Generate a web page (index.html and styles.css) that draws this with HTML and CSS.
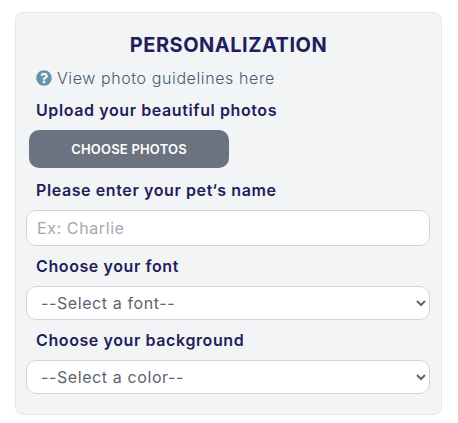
FILE: index.html
```html
<!DOCTYPE html>
<html lang="en">
<head>
<meta charset="utf-8">
<title>Personalization</title>
<link rel="stylesheet" href="styles.css">
</head>
<body>
<form class="card">
  <h2 class="title">PERSONALIZATION</h2>
  <a class="guide" href="#">
    <svg class="guide-icon" viewBox="0 0 512 512" aria-hidden="true"><path d="M504 256c0 137-111 248-248 248S8 393 8 256 119 8 256 8s248 111 248 248zM262.700 90c-54.500 0-89.300 23-116.600 63.800-3.500 5.300-2.400 12.400 2.700 16.300l34.700 26.300c5.200 3.900 12.600 3 16.700-2.100 17.900-22.700 30.100-35.800 57.300-35.800 20.400 0 45.700 13.100 45.700 33 0 15-12.400 22.700-32.600 34-23.600 13.200-54.800 29.700-54.800 70.900V302c0 6.600 5.400 12 12 12h56c6.600 0 12-5.400 12-12v-1.300c0-28.600 83.500-29.800 83.500-107.200C379.300 135.200 318.800 90 262.700 90zM256 339c-25.500 0-46.200 20.700-46.200 46.200 0 25.500 20.700 46.200 46.200 46.200s46.200-20.700 46.200-46.200c0-25.500-20.700-46.200-46.200-46.200z"/></svg>
    <span>View photo guidelines here</span>
  </a>
  <label class="label label-upload">Upload your beautiful photos</label>
  <button class="choose" type="button">CHOOSE PHOTOS</button>
  <label class="label label-pet" for="pet">Please enter your pet‘s name</label>
  <input class="field" id="pet" type="text" placeholder="Ex: Charlie">
  <label class="label" for="font">Choose your font</label>
  <select class="field select" id="font"><option>--Select a font--</option></select>
  <label class="label" for="bg">Choose your background</label>
  <select class="field select" id="bg"><option>--Select a color--</option></select>
</form>
</body>
</html>
```
FILE: styles.css
```css
* { box-sizing: border-box; }
body {
  margin: 0;
  padding: 12px 16px 8px 15px;
  background: #fff;
  font-family: Inter, "Liberation Sans", sans-serif;
}
.card {
  display: flex;
  flex-direction: column;
  align-items: flex-start;
  height: 403px;
  padding: 0 11px;
  background: #f3f4f6;
  border: 1px solid #e5e7eb;
  border-radius: 8px;
}
.title {
  align-self: stretch;
  margin: 20px 0 0;
  font-size: 20px;
  line-height: 24px;
  font-weight: 700;
  letter-spacing: 0.5px;
  text-align: center;
  color: #1e2159;
}
.guide {
  display: flex;
  align-items: center;
  gap: 5px;
  margin: 9px 0 0 9px;
  font-size: 16px;
  line-height: 24px;
  letter-spacing: 0.6px;
  font-weight: 300;
  color: #4a5a70;
  text-decoration: none;
}
.guide-icon { width: 16px; height: 16px; fill: #6295a9; }
.label {
  margin: 8px 0 0 9px;
  font-size: 16px;
  line-height: 24px;
  font-weight: 600;
  letter-spacing: 0.6px;
  color: #1e2159;
}
.label-pet { margin-top: 10px; }
.choose {
  width: 200px;
  height: 38px;
  margin: 8px 0 0 2px;
  border: 0;
  border-radius: 10px;
  background: #6b7280;
  color: #fff;
  font: 600 13px/16px Inter, "Liberation Sans", sans-serif;
  letter-spacing: 0.2px;
}
.field {
  width: 404px;
  margin: 8px 0 0 -1px;
  background: #fff;
  border: 1px solid #d1d5db;
  border-radius: 10px;
  font-family: Inter, "Liberation Sans", sans-serif;
  font-size: 16px;
  letter-spacing: 0.6px;
  color: #5b6471;
}
input.field { height: 36px; padding: 0 10px; }
input.field::placeholder { color: #a6a6b3; opacity: 1; }
.select { height: 34px; padding: 0 10px; }
```
